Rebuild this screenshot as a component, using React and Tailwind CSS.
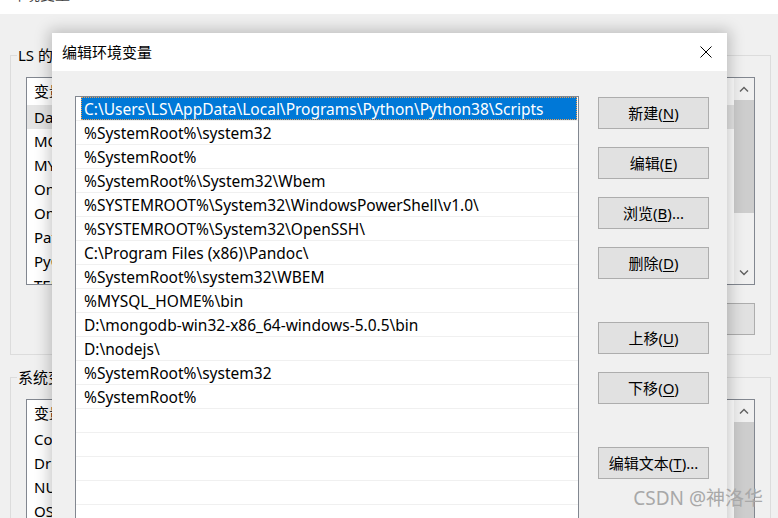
import React from "react";

const FONT = { fontFamily: '"Noto Sans", "Noto Sans CJK SC", sans-serif' };

const paths = [
  "C:\\Users\\LS\\AppData\\Local\\Programs\\Python\\Python38\\Scripts",
  "%SystemRoot%\\system32",
  "%SystemRoot%",
  "%SystemRoot%\\System32\\Wbem",
  "%SYSTEMROOT%\\System32\\WindowsPowerShell\\v1.0\\",
  "%SYSTEMROOT%\\System32\\OpenSSH\\",
  "C:\\Program Files (x86)\\Pandoc\\",
  "%SystemRoot%\\system32\\WBEM",
  "%MYSQL_HOME%\\bin",
  "D:\\mongodb-win32-x86_64-windows-5.0.5\\bin",
  "D:\\nodejs\\",
  "%SystemRoot%\\system32",
  "%SystemRoot%",
  "",
  "",
  "",
  "",
  "",
  "",
];

const userVars = ["DataGrip", "MOZ_PLUGIN_PATH", "MYSQL_HOME", "OneDrive", "OneDriveConsumer", "Path", "PyCharm", "TEMP", "TMP"];
const sysVars = ["ComSpec", "DriverData", "NUMBER_OF_PROCESSORS", "OS", "Path"];

function Chevron({ up }) {
  return (
    <svg width="10" height="6" viewBox="0 0 10 6" fill="none">
      <path d={up ? "M1 5.5 L5 1.5 L9 5.5" : "M1 0.5 L5 4.5 L9 0.5"} stroke="#606060" strokeWidth="1.4" />
    </svg>
  );
}

function ScrollBar({ thumb }) {
  return (
    <div className="w-[20px] flex flex-col bg-[#f0f0f0]">
      <div className="h-[22px] flex items-center justify-center shrink-0">
        <Chevron up />
      </div>
      <div className="bg-[#cdcdcd] shrink-0" style={{ height: thumb }} />
      <div className="flex-1" />
      <div className="h-[22px] flex items-center justify-center shrink-0">
        <Chevron />
      </div>
    </div>
  );
}

function VarList({ items, height, thumb, selected }) {
  return (
    <div className="border border-[#828790] bg-white flex" style={{ height }}>
      <div className="flex-1 overflow-hidden">
        <div className="h-[27px] flex items-center pl-[7px] text-[15px]">变量</div>
        {items.map((v, i) => (
          <div
            key={v}
            className={`h-[24px] flex items-center pl-[7px] text-[15px] whitespace-nowrap ${i === selected ? "bg-[#e5e5e5]" : ""}`}
          >
            {v}
          </div>
        ))}
      </div>
      <ScrollBar thumb={thumb} />
    </div>
  );
}

function WinButton({ label, keyChar, tail = "" }) {
  return (
    <button className="w-[111px] h-[32px] shrink-0 bg-[#e1e1e1] border border-[#adadad] text-[15px] text-black flex items-center justify-center">
      {label}(<span className="underline underline-offset-2">{keyChar}</span>){tail}
    </button>
  );
}

export default function App() {
  return (
    <div className="w-[778px] h-[518px] relative overflow-hidden bg-[#f0f0f0] text-black" style={FONT}>
      {/* background window */}
      <div className="h-[14px] bg-white overflow-hidden pl-[10px]">
        <div className="-mt-[14px] text-[15px] leading-[16px] text-[#444]">环境变量</div>
      </div>

      <div className="pl-[10px]">
        <fieldset className="mt-[31px] w-[761px] border border-[#dcdcdc] p-0">
          <legend className="ml-[6px] px-[1px] text-[15px] leading-[20px]">LS 的用户变量(U)</legend>
          <div className="px-[15px] pb-[19px]">
            <div className="mt-[12px]">
              <VarList items={userVars} height={208} thumb={113} selected={0} />
            </div>
            <div className="mt-[18px] flex justify-end gap-[13px]">
              <WinButton label="新建" keyChar="N" tail="..." />
              <WinButton label="编辑" keyChar="I" tail="..." />
              <WinButton label="删除" keyChar="D" />
            </div>
          </div>
        </fieldset>

        <fieldset className="mt-[12px] w-[761px] border border-[#dcdcdc] p-0">
          <legend className="ml-[6px] px-[1px] text-[15px] leading-[20px]">系统变量(S)</legend>
          <div className="px-[15px] pb-[19px]">
            <div className="mt-[12px]">
              <VarList items={sysVars} height={208} thumb={113} selected={-1} />
            </div>
          </div>
        </fieldset>
      </div>

      {/* edit dialog */}
      <div className="absolute left-[52px] top-[33px] w-[675px] h-[500px] bg-[#f0f0f0] flex flex-col shadow-[0_0_14px_3px_rgba(0,0,0,0.22)]">
        <div className="h-[38px] bg-white flex items-center justify-between pl-[10px] pr-[15px] shrink-0">
          <span className="text-[15px]">编辑环境变量</span>
          <svg width="12" height="12" viewBox="0 0 12 12">
            <path d="M0.5 0.5 L11.5 11.5 M11.5 0.5 L0.5 11.5" stroke="#000" strokeWidth="1" />
          </svg>
        </div>

        <div className="flex items-start pl-[23px] pt-[25px]">
          <div className="w-[504px] h-[440px] border border-[#828790] bg-white overflow-hidden">
            {paths.map((p, i) =>
              i === 0 ? (
                <div key={i} className="h-[24px] border-b border-[#f0f0f0] pl-[5px] pr-[1px]">
                  <div className="h-full bg-[#0078d7] border border-dotted border-[#f0a050] pl-[2px] pt-[3px] flex items-center text-white text-[15.5px] whitespace-nowrap">
                    {p}
                  </div>
                </div>
              ) : (
                <div key={i} className="h-[24px] border-b border-[#f0f0f0] pl-[8px] pt-[3px] flex items-center text-[15.5px] whitespace-nowrap">
                  {p}
                </div>
              )
            )}
          </div>

          <div className="ml-[19px] mt-[1px] flex flex-col">
            <WinButton label="新建" keyChar="N" />
            <div className="mt-[18px]"><WinButton label="编辑" keyChar="E" /></div>
            <div className="mt-[18px]"><WinButton label="浏览" keyChar="B" tail="..." /></div>
            <div className="mt-[18px]"><WinButton label="删除" keyChar="D" /></div>
            <div className="mt-[43px]"><WinButton label="上移" keyChar="U" /></div>
            <div className="mt-[18px]"><WinButton label="下移" keyChar="O" /></div>
            <div className="mt-[43px]"><WinButton label="编辑文本" keyChar="T" tail="..." /></div>
          </div>
        </div>
      </div>

      {/* watermark */}
      <div className="absolute right-[15px] top-[484px] text-[19px] text-[#a8a8a8] whitespace-nowrap">
        CSDN @神洛华
      </div>
    </div>
  );
}
